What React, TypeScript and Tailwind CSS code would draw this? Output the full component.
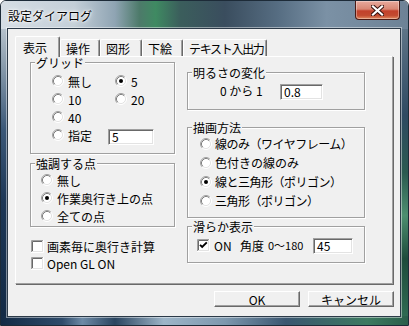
import React from "react";

function Radio({ checked }: { checked?: boolean }) {
  return (
    <svg width="12" height="12" viewBox="0 0 12 12" className="shrink-0">
      <circle cx="6" cy="6" r="4.5" fill="#fff" />
      <path d="M2.11 9.89 A5.5 5.5 0 0 1 9.89 2.11" fill="none" stroke="#a0a0a0" />
      <path d="M9.89 2.11 A5.5 5.5 0 0 1 2.11 9.89" fill="none" stroke="#ffffff" />
      <path d="M2.82 9.18 A4.5 4.5 0 0 1 9.18 2.82" fill="none" stroke="#808080" />
      <path d="M9.18 2.82 A4.5 4.5 0 0 1 2.82 9.18" fill="none" stroke="#e3e3e3" />
      {checked && <circle cx="6" cy="6" r="2" fill="#000" />}
    </svg>
  );
}

function Check({ checked }: { checked?: boolean }) {
  return (
    <svg width="13" height="13" viewBox="0 0 13 13" className="shrink-0">
      <rect x="2" y="2" width="9" height="9" fill="#fff" />
      <path d="M0.5 12V0.5H12" fill="none" stroke="#a0a0a0" />
      <path d="M1.5 11V1.5H11" fill="none" stroke="#696969" />
      <path d="M1 11.5H11.5V1" fill="none" stroke="#e3e3e3" />
      <path d="M0 12.5H12.5V0" fill="none" stroke="#ffffff" />
      {checked && (
        <path d="M3 5.8 L5.2 8 L9.8 3.4" fill="none" stroke="#000" strokeWidth="1.9" />
      )}
    </svg>
  );
}

function Edit({ value, w }: { value: string; w: string }) {
  return (
    <div
      className={`${w} h-[16px] shrink-0 bg-white border border-t-[#a0a0a0] border-l-[#a0a0a0] border-r-white border-b-white shadow-[inset_1px_1px_0_#696969,inset_-1px_-1px_0_#e3e3e3] pl-[3px] flex items-center text-[12px] leading-[13px]`}
    >
      {value}
    </div>
  );
}

function Group({
  label,
  className,
  children,
}: {
  label: string;
  className: string;
  children?: React.ReactNode;
}) {
  return (
    <div
      className={`border border-[#a0a0a0] shadow-[inset_1px_1px_0_#fff,1px_1px_0_#fff] ${className}`}
    >
      <div className="-mt-[6px] ml-[4px] w-fit bg-[#f0f0f0] px-[1px] leading-[12px] whitespace-nowrap">
        {label}
      </div>
      {children}
    </div>
  );
}

function Tab({
  label,
  w,
  selected,
  extra = "",
}: {
  label: string;
  w: string;
  selected?: boolean;
  extra?: string;
}) {
  return (
    <div
      className={`${w} ${
        selected
          ? "h-[21px] -mb-px relative z-10 pl-[7px] bg-[#f0f0f0]"
          : "h-[17px] pl-[5px]"
      } flex items-center rounded-t-[2px] border-t border-l border-r border-t-white border-l-white border-r-[#696969] shadow-[inset_-1px_0_0_#a0a0a0] leading-[13px] whitespace-nowrap overflow-hidden ${extra}`}
    >
      {label}
    </div>
  );
}

function Button({ label }: { label: string }) {
  return (
    <div className="w-[86px] h-[16px] flex items-center justify-center bg-[#f0f0f0] border border-t-white border-l-white border-r-[#696969] border-b-[#696969] shadow-[inset_-1px_-1px_0_#a0a0a0] leading-[13px]">
      {label}
    </div>
  );
}

export default function App() {
  return (
    <div className="w-[409px] h-[326px] flex flex-col overflow-hidden rounded-t-[6px] border border-[#1d2b38] font-['Noto_Sans_CJK_JP','Noto_Sans_CJK_SC',sans-serif] text-[12px] leading-[13px] text-black">
      {/* title bar */}
      <div className="h-[28px] shrink-0 flex justify-between items-start bg-[image:linear-gradient(90deg,#d5dde4_0%,#c4cfd8_18%,#8fa4b3_28%,#4d7a6a_34%,#3f8a62_38%,#3b5e5c_44%,#3a4d5e_55%,#566d82_68%,#7b91a5_80%,#6d8296_100%)]">
        <div className="pl-[7px] pt-[8px] [text-shadow:0_0_6px_#fff,0_0_3px_#fff,0_0_2px_#fff]">
          設定ダイアログ
        </div>
        <div className="mr-[8px] w-[45px] h-[19px] rounded-b-[4px] border border-t-0 border-[#4a1a14] bg-[image:linear-gradient(180deg,#e8aa9d_0%,#d98774_45%,#c2412b_55%,#c24a30_80%,#e08a60_100%)] shadow-[inset_0_0_0_1px_rgba(255,255,255,0.35)] flex items-center justify-center">
          <svg width="13" height="11" viewBox="0 0 13 11">
            <path d="M2 1.5 L11 9.5 M11 1.5 L2 9.5" stroke="#3a1410" strokeWidth="4.2" strokeLinecap="square" />
            <path d="M2 1.5 L11 9.5 M11 1.5 L2 9.5" stroke="#ffffff" strokeWidth="2.2" strokeLinecap="square" />
          </svg>
        </div>
      </div>

      {/* middle */}
      <div className="flex h-[287px] shrink-0">
        <div className="w-[7px] bg-[image:linear-gradient(180deg,#b5c1cb_0%,#8c9eae_12%,#3b5878_35%,#1d3756_60%,#132a45_100%)]" />
        <div className="relative w-[392px] bg-[#f0f0f0] shadow-[0_0_0_1px_#2c3a48,0_0_0_2px_rgba(255,255,255,0.45)] flex flex-col pt-[7px] pl-[7px]">
          {/* tabs */}
          <div className="flex items-end h-[20px]">
            <Tab label="表示" w="w-[45px]" selected />
            <Tab label="操作" w="w-[40px]" />
            <Tab label="図形" w="w-[42px]" />
            <Tab label="下絵" w="w-[41px]" />
            <Tab label="テキスト入出力" w="w-[84px]" extra="tracking-[-1.3px]" />
          </div>
          {/* panel */}
          <div className="w-[378px] h-[228px] border border-t-white border-l-white border-r-[#a0a0a0] border-b-[#a0a0a0] shadow-[1px_1px_0_#696969] flex items-start pl-[14px] gap-[12px]">
            {/* left column */}
            <div className="w-[145px] flex flex-col">
              <Group label="グリッド" className="mt-[5px] h-[92px]">
                <div className="mt-[3px] pl-[21px] grid grid-cols-[63px_1fr] auto-rows-[18px]">
                  <div className="flex items-center gap-[4px]">
                    <Radio />
                    <span>無し</span>
                  </div>
                  <div className="flex items-center gap-[4px]">
                    <Radio checked />
                    <span>5</span>
                  </div>
                  <div className="flex items-center gap-[4px]">
                    <Radio />
                    <span>10</span>
                  </div>
                  <div className="flex items-center gap-[4px]">
                    <Radio />
                    <span>20</span>
                  </div>
                  <div className="flex items-center gap-[4px] col-span-2">
                    <Radio />
                    <span>40</span>
                  </div>
                  <div className="flex items-center gap-[4px] col-span-2">
                    <Radio />
                    <span className="w-[36px]">指定</span>
                    <div className="mt-[3px]">
                      <Edit value="5" w="w-[46px]" />
                    </div>
                  </div>
                </div>
              </Group>
              <Group label="強調する点" className="mt-[9px] h-[64px]">
                <div className="mt-[1px] pl-[10px] flex flex-col">
                  <div className="h-[18px] flex items-center gap-[4px]">
                    <Radio />
                    <span>無し</span>
                  </div>
                  <div className="h-[18px] flex items-center gap-[4px]">
                    <Radio checked />
                    <span>作業奥行き上の点</span>
                  </div>
                  <div className="h-[18px] flex items-center gap-[4px]">
                    <Radio />
                    <span>全ての点</span>
                  </div>
                </div>
              </Group>
              <div className="mt-[11px] pl-[1px] flex flex-col">
                <div className="h-[17px] flex items-center gap-[3px]">
                  <Check />
                  <span>画素毎に奥行き計算</span>
                </div>
                <div className="h-[17px] flex items-center gap-[3px]">
                  <Check />
                  <span>Open GL ON</span>
                </div>
              </div>
            </div>

            {/* right column */}
            <div className="w-[178px] flex flex-col">
              <Group label="明るさの変化" className="mt-[15px] h-[38px]">
                <div className="mt-[2px] h-[18px] flex items-center">
                  <span className="w-[92px] pl-[32px] whitespace-nowrap">0 から 1</span>
                  <div className="mt-[3px]">
                    <Edit value="0.8" w="w-[43px]" />
                  </div>
                </div>
              </Group>
              <Group label="描画方法" className="mt-[17px] h-[91px]">
                <div className="pl-[12px] flex flex-col">
                  <div className="h-[19px] flex items-center gap-[3px]">
                    <Radio />
                    <span className="tracking-[-0.5px]">線のみ（ワイヤフレーム）</span>
                  </div>
                  <div className="h-[19px] flex items-center gap-[3px]">
                    <Radio />
                    <span>色付きの線のみ</span>
                  </div>
                  <div className="h-[19px] flex items-center gap-[3px]">
                    <Radio checked />
                    <span className="tracking-[-0.5px]">線と三角形（ポリゴン）</span>
                  </div>
                  <div className="h-[19px] flex items-center gap-[3px]">
                    <Radio />
                    <span className="tracking-[-0.5px]">三角形（ポリゴン）</span>
                  </div>
                </div>
              </Group>
              <Group label="滑らか表示" className="mt-[8px] h-[37px]">
                <div className="mt-[3px] h-[18px] pl-[9px] flex items-center whitespace-nowrap">
                  <Check checked />
                  <span className="ml-[4px] w-[26px]">ON</span>
                  <span className="w-[28px]">角度</span>
                  <span className="w-[45px] text-[11px]">0〜180</span>
                  <div className="mt-[1px]">
                    <Edit value="45" w="w-[40px]" />
                  </div>
                </div>
              </Group>
            </div>
          </div>
          {/* buttons */}
          <div className="mt-[7px] pr-[6px] flex justify-end gap-[8px]">
            <Button label="OK" />
            <Button label="キャンセル" />
          </div>
        </div>
        <div className="w-[8px] bg-[image:linear-gradient(180deg,#5e7487_0%,#2f4a62_30%,#2a5a50_50%,#4d8f70_65%,#1e4c3c_80%,#2f6a52_100%)]" />
      </div>

      {/* bottom frame */}
      <div className="flex-1 bg-[image:linear-gradient(90deg,#132a45_0%,#2e4b6a_15%,#6d8aa6_20%,#2a4560_28%,#9db5c8_40%,#7d98ae_55%,#3a5670_70%,#3c7a60_90%,#2a5e4a_100%)]" />
    </div>
  );
}
